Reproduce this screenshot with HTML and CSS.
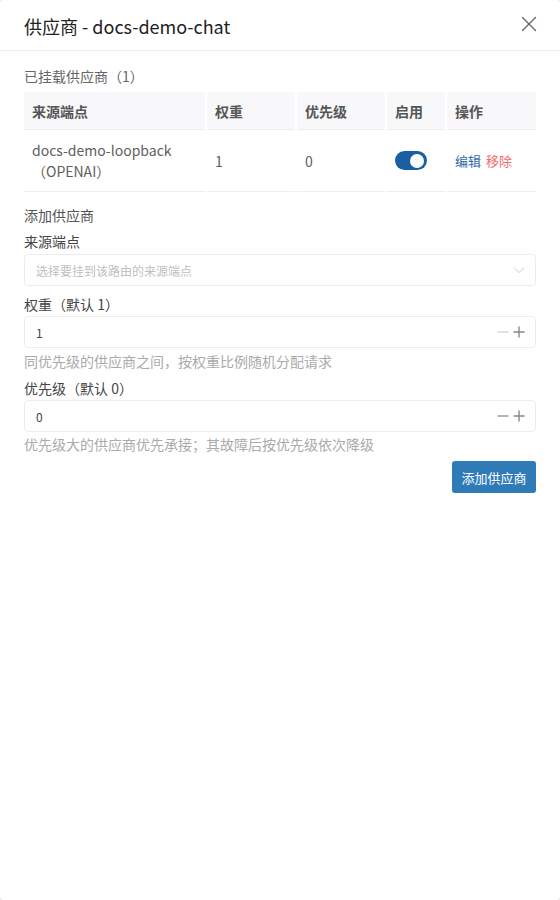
FILE: index.html
```html
<!DOCTYPE html>
<html lang="zh-CN">
<head>
<meta charset="utf-8">
<title>供应商 - docs-demo-chat</title>
<link rel="stylesheet" href="styles.css">
</head>
<body>
<div class="modal">
  <div class="modal-header">
    <div class="modal-title">供应商 - docs-demo-chat</div>
    <button class="close-btn" aria-label="关闭">
      <svg width="16" height="16" viewBox="0 0 16 16"><path d="M1.5 1.5L14.5 14.5M14.5 1.5L1.5 14.5" stroke="#666" stroke-width="1.4" fill="none" stroke-linecap="round"/></svg>
    </button>
  </div>
  <div class="modal-body">
    <div class="section-title">已挂载供应商（1）</div>
    <div class="table">
      <div class="th">来源端点</div>
      <div class="th">权重</div>
      <div class="th">优先级</div>
      <div class="th">启用</div>
      <div class="th">操作</div>
      <div class="td td-name">docs-demo-loopback<br>（OPENAI）</div>
      <div class="td">1</div>
      <div class="td">0</div>
      <div class="td"><span class="switch"><span class="knob"></span></span></div>
      <div class="td actions"><a class="link-edit">编辑</a><a class="link-remove">移除</a></div>
    </div>

    <div class="add-title">添加供应商</div>

    <div class="form-label">来源端点</div>
    <div class="select">
      <span class="placeholder">选择要挂到该路由的来源端点</span>
      <svg width="12" height="12" viewBox="0 0 12 12"><path d="M1 3.8L6 8.5L11 3.8" stroke="#c8c8c8" stroke-width="1" fill="none"/></svg>
    </div>

    <div class="form-label mt">权重（默认 1）</div>
    <div class="number">
      <span class="num-val">1</span>
      <span class="steppers">
        <svg width="12" height="12" viewBox="0 0 12 12"><path d="M0.5 6H11.5" stroke="#d4d4d4" stroke-width="1.4"/></svg>
        <svg width="12" height="12" viewBox="0 0 12 12"><path d="M0.5 6H11.5M6 0.5V11.5" stroke="#888" stroke-width="1.4"/></svg>
      </span>
    </div>
    <div class="hint">同优先级的供应商之间，按权重比例随机分配请求</div>

    <div class="form-label mt2">优先级（默认 0）</div>
    <div class="number">
      <span class="num-val">0</span>
      <span class="steppers">
        <svg width="12" height="12" viewBox="0 0 12 12"><path d="M0.5 6H11.5" stroke="#999" stroke-width="1.4"/></svg>
        <svg width="12" height="12" viewBox="0 0 12 12"><path d="M0.5 6H11.5M6 0.5V11.5" stroke="#888" stroke-width="1.4"/></svg>
      </span>
    </div>
    <div class="hint hint2">优先级大的供应商优先承接；其故障后按优先级依次降级</div>

    <div class="footer">
      <button class="btn-primary">添加供应商</button>
    </div>
  </div>
</div>
</body>
</html>
```

FILE: styles.css
```css
* { box-sizing: border-box; }
html, body {
  margin: 0;
  padding: 0;
  height: 100%;
  background: #e9e9ec;
}
body {
  font-family: "Noto Sans CJK SC", "Noto Sans", sans-serif;
  color: #555;
}
.modal {
  background: #fff;
  height: 900px;
  border-radius: 4px;
  display: flex;
  flex-direction: column;
}
.modal-header {
  height: 51px;
  border-bottom: 1px solid #ececf0;
  display: flex;
  align-items: center;
  justify-content: space-between;
  padding: 0 24px 0 24px;
}
.modal-title {
  font-size: 18px;
  color: #222;
  line-height: 24px;
  margin-top: 1px;
}
.close-btn {
  border: none;
  background: none;
  padding: 0;
  width: 16px;
  height: 16px;
  display: flex;
  margin-right: -1px;
  margin-top: -2px;
}
.modal-body {
  padding: 15px 24px 0 24px;
  display: flex;
  flex-direction: column;
}
.section-title {
  font-size: 14px;
  line-height: 20px;
  color: #666;
}
.table {
  margin-top: 6px;
  display: grid;
  grid-template-columns: 181px 88px 88px 58px 89px;
  column-gap: 2px;
}
.th {
  background: #f8f8fa;
  height: 38px;
  padding: 0 8px;
  display: flex;
  align-items: center;
  font-size: 14px;
  font-weight: 700;
  color: #555;
  border-bottom: 1px solid #eeeef2;
}
.th:first-child { border-top-left-radius: 3px; }
.th:nth-child(5) { border-top-right-radius: 3px; }
.td {
  height: 62px;
  padding: 0 8px;
  display: flex;
  align-items: center;
  font-size: 14px;
  color: #5e5e5e;
  border-bottom: 1px solid #eeeef2;
}
.td-name {
  display: block;
  padding-top: 10px;
  line-height: 21px;
}
.switch {
  width: 32px;
  height: 19px;
  border-radius: 10px;
  background: #1b5fa2;
  display: flex;
  align-items: center;
  justify-content: flex-end;
  padding: 0 3px;
}
.knob {
  width: 14px;
  height: 14px;
  border-radius: 50%;
  background: #fff;
}
.actions {
  gap: 5px;
  font-size: 13px;
}
.link-edit { color: #2f6ca8; }
.link-remove { color: #f46a6a; }
.add-title {
  margin-top: 13px;
  font-size: 14px;
  line-height: 20px;
  color: #555;
}
.form-label {
  margin-top: 6px;
  font-size: 14px;
  line-height: 20px;
  color: #444;
}
.form-label.mt { margin-top: 8px; }
.form-label.mt2 { margin-top: 7px; }
.select, .number {
  margin-top: 3px;
  height: 32px;
  border: 1px solid #ececef;
  border-radius: 4px;
  display: flex;
  align-items: center;
  justify-content: space-between;
  padding: 0 10px 0 11px;
}
.number { margin-top: 2px; }
.placeholder {
  font-size: 12px;
  color: #c0c0c0;
}
.num-val {
  font-size: 12px;
  color: #444;
}
.steppers {
  display: flex;
  gap: 4px;
}
.hint {
  margin-top: 3px;
  font-size: 14px;
  line-height: 20px;
  color: #aaa;
}
.hint2 { margin-top: 2px; }
.footer {
  margin-top: 7px;
  display: flex;
  justify-content: flex-end;
}
.btn-primary {
  font-family: inherit;
  height: 32px;
  width: 84px;
  border: none;
  border-radius: 3px;
  background: #2f7bb8;
  color: #fff;
  font-size: 13px;
  padding: 0;
}
```
